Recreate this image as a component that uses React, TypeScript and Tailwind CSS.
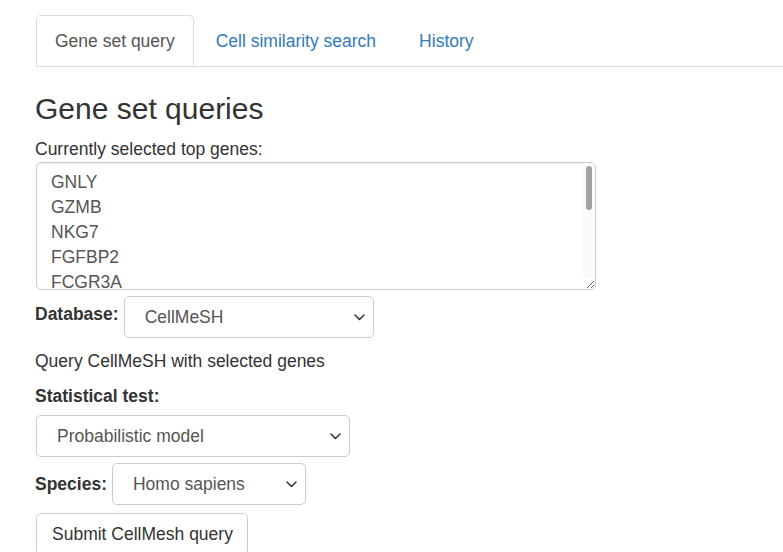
import React from "react";

const Chevron = () => (
  <svg width="11" height="7" viewBox="0 0 11 7" className="shrink-0">
    <path d="M1 1 L5.5 5.5 L10 1" fill="none" stroke="#333" strokeWidth="1.5" strokeLinecap="round" strokeLinejoin="round" />
  </svg>
);

function FakeSelect({ value, className }: { value: string; className: string }) {
  return (
    <div
      className={`flex h-[42px] items-center justify-between rounded-[5px] border border-[#ccc] bg-white pl-[20px] pr-[8px] text-[#555] ${className}`}
    >
      <span>{value}</span>
      <Chevron />
    </div>
  );
}

export default function App() {
  const genes = ["GNLY", "GZMB", "NKG7", "FGFBP2", "FCGR3A", "PRF1", "GZMA"];
  return (
    <div
      className="min-h-[552px] w-[783px] overflow-hidden bg-white text-[17.5px] leading-[25px] text-[#333]"
      style={{ fontFamily: '"Liberation Sans", Arial, Helvetica, sans-serif' }}
    >
      <div className="pt-[15px] pl-[35px]">
        {/* Tabs */}
        <div className="ml-[1px] flex border-b border-[#ddd]">
          <div className="-mb-px flex h-[51px] items-center rounded-t-[5px] border border-[#ddd] border-b-white bg-white px-[18px] pt-[2px] text-[#555]">
            Gene set query
          </div>
          <div className="ml-[2px] flex h-[51px] items-center border border-transparent px-[19px] pt-[2px] text-[#337ab7]">
            Cell similarity search
          </div>
          <div className="ml-[3px] flex h-[51px] items-center border border-transparent px-[19px] pt-[2px] text-[#337ab7]">
            History
          </div>
        </div>

        <h3 className="mt-[25px] mb-[12px] text-[30px] leading-[33px] font-normal text-[#333]">Gene set queries</h3>

        <div>Currently selected top genes:</div>

        <div className="relative ml-[1px] h-[128px] w-[560px] resize overflow-hidden rounded-[5px] border border-[#ccc] bg-white shadow-[inset_0_1px_1px_rgba(0,0,0,0.075)]">
          <div className="h-full overflow-hidden px-[14px] py-[7px] pr-[26px] text-[#555]">
            {genes.map((g) => (
              <div key={g}>{g}</div>
            ))}
          </div>
          <div className="absolute top-0 right-0 bottom-[11px] w-[12px] bg-[#fafafa]">
            <div className="absolute top-[3px] right-[3px] h-[44px] w-[6px] rounded-[3px] bg-[#a3a3a3]" />
          </div>
        </div>

        <div className="mt-[6px] flex items-start">
          <div className="mt-[6px] font-bold">Database:</div>
          <FakeSelect value="CellMeSH" className="ml-[5px] w-[250px]" />
        </div>

        <div className="mt-[11px]">Query CellMeSH with selected genes</div>

        <div className="mt-[10px] font-bold">Statistical test:</div>
        <FakeSelect value="Probabilistic model" className="mt-[6px] ml-[1px] w-[314px]" />

        <div className="mt-[6px] flex items-center">
          <div className="font-bold">Species:</div>
          <FakeSelect value="Homo sapiens" className="ml-[5px] w-[194px]" />
        </div>

        <button className="mt-[8px] ml-[1px] flex h-[42px] items-center whitespace-nowrap rounded-[5px] border border-[#ccc] bg-white pl-[15px] pr-[14px] text-[#333]">
          Submit CellMesh query
        </button>
      </div>
    </div>
  );
}
